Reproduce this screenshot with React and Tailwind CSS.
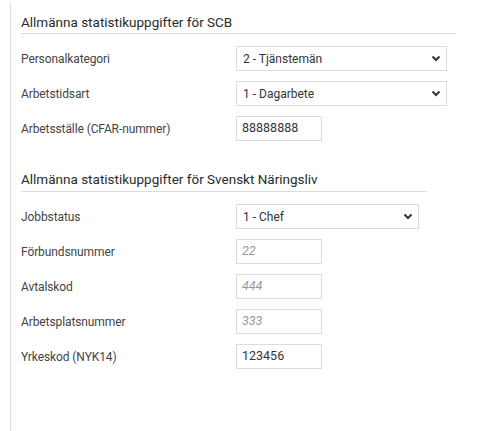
import React from "react";

function Chevron() {
  return (
    <svg width="10" height="7" viewBox="0 0 10 7" className="shrink-0">
      <path d="M1.5 1.5 L5 5 L8.5 1.5" fill="none" stroke="#333" strokeWidth="2" />
    </svg>
  );
}

function SelectBox({ value, width }) {
  return (
    <div
      className={`${width} h-[25px] border border-[#dcdcdc] bg-white flex items-center justify-between pl-[6px] pr-[5px] text-[12px] text-[#333]`}
    >
      <span>{value}</span>
      <Chevron />
    </div>
  );
}

function InputBox({ value, placeholder }) {
  return (
    <div className="w-[86px] h-[25px] border border-[#dcdcdc] bg-white flex items-center px-[5px] text-[12.5px]">
      {value ? (
        <span className="text-[#333]">{value}</span>
      ) : (
        <span className="italic text-[#999]">{placeholder}</span>
      )}
    </div>
  );
}

function Row({ label, children }) {
  return (
    <div className="flex items-center h-[25px]">
      <div className="w-[215px] text-[12px] tracking-[-0.1px] text-[#444]">{label}</div>
      {children}
    </div>
  );
}

export default function App() {
  return (
    <div
      className="w-[500px] h-[431px] bg-white pl-[10px] pt-[2px]"
      style={{ fontFamily: "Roboto, 'Liberation Sans', sans-serif" }}
    >
      <div className="h-full border-l border-[#dedede] pl-[10px] pt-[10px]">
        <div className="w-[435px]">
          <h2 className="text-[13.5px] leading-[20px] text-[#2a2a2a] pb-[1px] border-b border-[#dcdcdc]">
            Allmänna statistikuppgifter för SCB
          </h2>
          <div className="mt-[12px] flex flex-col gap-[10px]">
            <Row label="Personalkategori">
              <SelectBox value="2 - Tjänstemän" width="w-[211px]" />
            </Row>
            <Row label="Arbetstidsart">
              <SelectBox value="1 - Dagarbete" width="w-[211px]" />
            </Row>
            <Row label="Arbetsställe (CFAR-nummer)">
              <InputBox value="88888888" />
            </Row>
          </div>
        </div>

        <div className="w-[406px] mt-[28px]">
          <h2 className="text-[13.5px] leading-[20px] text-[#2a2a2a] pb-[2px] border-b border-[#dcdcdc]">
            Allmänna statistikuppgifter för Svenskt Näringsliv
          </h2>
          <div className="mt-[12px] flex flex-col gap-[10px]">
            <Row label="Jobbstatus">
              <SelectBox value="1 - Chef" width="w-[183px]" />
            </Row>
            <Row label="Förbundsnummer">
              <InputBox placeholder="22" />
            </Row>
            <Row label="Avtalskod">
              <InputBox placeholder="444" />
            </Row>
            <Row label="Arbetsplatsnummer">
              <InputBox placeholder="333" />
            </Row>
            <Row label="Yrkeskod (NYK14)">
              <InputBox value="123456" />
            </Row>
          </div>
        </div>
      </div>
    </div>
  );
}
